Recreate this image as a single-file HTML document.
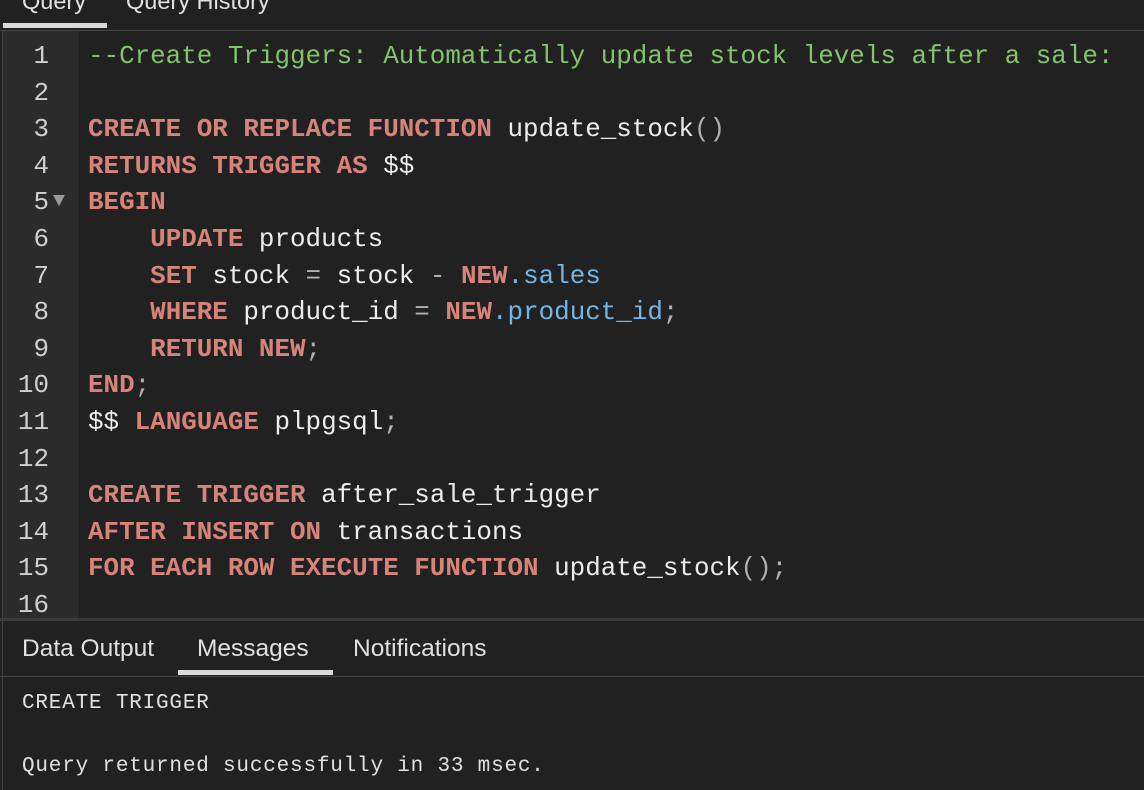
<!DOCTYPE html>
<html><head><style>
body{margin:0;width:1144px;height:790px;background:#212121;overflow:hidden;font-family:"Liberation Sans",sans-serif;position:relative}
.tabs{position:absolute;left:0;top:0;width:1144px;height:30px;border-bottom:1px solid #444}
.tab{position:absolute;top:-12px;font-size:23.5px;color:#e0e0e0}
.ul{position:absolute;background:#d9d9d9;height:5px}
.gut{position:absolute;left:3px;top:31px;width:76px;height:587px;background:#2b2b2b}
.lb{position:absolute;left:2px;top:31px;width:1px;height:759px;background:#444}
.code{position:absolute;left:0;top:38px;font-family:"Liberation Mono",monospace;font-size:25.9px;line-height:36.6px;color:#ececec}
.ln{position:absolute;left:0;width:49px;text-align:right;color:#d0d0d0}
.tx{position:absolute;left:88px;top:0;white-space:pre}
.k{color:#d6837a;font-weight:bold}.c{color:#82c36c}.b{color:#73b6e6}.p{color:#b0b0b0}
.bot{position:absolute;left:0;top:618px;width:1144px;height:3px;background:#3a3a3a}
.bt{position:absolute;top:635px;font-size:24.5px;color:#e0e0e0}
.msg{position:absolute;left:22px;font-family:"Liberation Mono",monospace;font-size:21px;letter-spacing:0.8px;color:#e0e0e0}
</style></head><body>
<div class="tabs"></div>
<div class="tab" style="left:22px">Query</div>
<div class="tab" style="left:126px">Query History</div>
<div class="ul" style="left:3px;top:23px;width:104px"></div>
<div class="gut"></div><div class="lb"></div>
<div class="code"><div class="ln" style="top:0">1</div><div class="ln" style="top:36.6px">2</div><div class="ln" style="top:73.2px">3</div><div class="ln" style="top:109.8px">4</div><div class="ln" style="top:146.4px">5<span style="position:absolute;left:53px;top:0;color:#999;font-size:20px">▼</span></div><div class="ln" style="top:183px">6</div><div class="ln" style="top:219.6px">7</div><div class="ln" style="top:256.2px">8</div><div class="ln" style="top:292.8px">9</div><div class="ln" style="top:329.4px">10</div><div class="ln" style="top:366px">11</div><div class="ln" style="top:402.6px">12</div><div class="ln" style="top:439.2px">13</div><div class="ln" style="top:475.8px">14</div><div class="ln" style="top:512.4px">15</div><div class="ln" style="top:549px">16</div><div class="tx"><span class="c">--Create Triggers: Automatically update stock levels after a sale:</span>

<span class="k">CREATE OR REPLACE FUNCTION</span> update_stock<span class="p">()</span>
<span class="k">RETURNS TRIGGER AS</span> $$
<span class="k">BEGIN</span>
    <span class="k">UPDATE</span> products
    <span class="k">SET</span> stock <span class="p">=</span> stock <span class="p">-</span> <span class="k">NEW</span><span class="b">.sales</span>
    <span class="k">WHERE</span> product_id <span class="p">=</span> <span class="k">NEW</span><span class="b">.product_id</span><span class="p">;</span>
    <span class="k">RETURN NEW</span><span class="p">;</span>
<span class="k">END</span><span class="p">;</span>
$$ <span class="k">LANGUAGE</span> plpgsql<span class="p">;</span>

<span class="k">CREATE TRIGGER</span> after_sale_trigger
<span class="k">AFTER INSERT ON</span> transactions
<span class="k">FOR EACH ROW EXECUTE FUNCTION</span> update_stock<span class="p">();</span></div></div>
<div class="bot"></div>
<div class="bt" style="left:22px">Data Output</div>
<div class="bt" style="left:197px">Messages</div>
<div class="bt" style="left:353px">Notifications</div>
<div style="position:absolute;left:0;top:676px;width:1144px;height:1px;background:#444"></div>
<div class="ul" style="left:178px;top:670px;width:155px"></div>
<div class="msg" style="top:692px">CREATE TRIGGER</div>
<div class="msg" style="top:755px">Query returned successfully in 33 msec.</div>
</body></html>
